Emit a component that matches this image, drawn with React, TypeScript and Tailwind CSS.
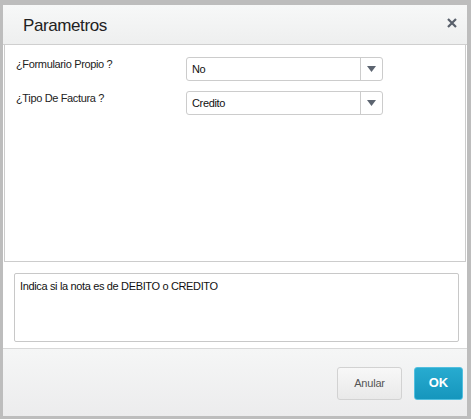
const fields = [
  { label: "¿Formulario Propio ?", value: "No" },
  { label: "¿Tipo De Factura ?", value: "Credito" },
]

function SelectBox({ value }: { value: string }) {
  return (
    <div className="flex h-[24px] w-[197px] rounded-[3px] border border-[#cccccc] bg-white">
      <div className="flex flex-1 items-center pl-[5px] text-[11px] tracking-[-0.35px] text-[#111]">{value}</div>
      <div className="flex w-[22px] items-center justify-center border-l border-[#cccccc]">
        <svg width="9" height="6" viewBox="0 0 9 6">
          <path d="M0 0h9L4.5 6z" fill="#5c6470" />
        </svg>
      </div>
    </div>
  )
}

export default function App() {
  return (
    <div
      className="h-[419px] w-[471px] bg-[#bdbdbd] pt-[5px] pl-[3px] pr-[4px] pb-[3px]"
      style={{ fontFamily: '"Liberation Sans", Arial, sans-serif' }}
    >
      <div className="flex h-full flex-col bg-white">
        {/* header */}
        <div className="flex h-[40px] items-center justify-between border-b border-[#cfcfcf] bg-gradient-to-b from-[#f7f8f8] to-[#eeefef] pl-[20px] pr-[10px] pt-[2px]">
          <span className="text-[17px] tracking-[-0.4px] text-[#222]">Parametros</span>
          <svg width="10" height="10" viewBox="0 0 10 10" className="mb-[5px]">
            <path d="M1 1l8 8M9 1l-8 8" stroke="#59606b" strokeWidth="2.2" />
          </svg>
        </div>

        {/* parameter fields */}
        <div className="mx-[1px] flex h-[217px] flex-col gap-[10px] border-x border-b border-[#cccccc] pl-[11px] pt-[12px]">
          {fields.map((f) => (
            <div key={f.label} className="flex items-start">
              <div className="w-[170px] text-[11px] leading-[14px] tracking-[-0.35px] text-[#222]">{f.label}</div>
              <SelectBox value={f.value} />
            </div>
          ))}
        </div>

        {/* help text */}
        <div className="px-[11px] pt-[11px] pb-[6px]">
          <div className="h-[69px] w-[445px] rounded-[2px] border border-[#c8c8c8] px-[5px] pt-[4px] text-[11px] tracking-[-0.35px] text-[#111]">
            Indica si la nota es de DEBITO o CREDITO
          </div>
        </div>

        {/* footer */}
        <div className="flex flex-1 items-center justify-end gap-[12px] border-t border-[#d8d8d8] bg-gradient-to-b from-[#f5f6f6] to-[#ececed] pr-[4px] pt-[1px]">
          <button className="h-[33px] w-[65px] rounded-[3px] border border-[#d2d2d2] bg-gradient-to-b from-[#f8f8f8] to-[#e9e9e9] text-[11px] tracking-[-0.2px] text-[#555]">
            Anular
          </button>
          <button className="h-[33px] w-[49px] rounded-[3px] border border-[#52bfdf] bg-gradient-to-b from-[#27abd0] to-[#1596bd] text-[13px] font-bold text-white">
            OK
          </button>
        </div>
      </div>
    </div>
  )
}
